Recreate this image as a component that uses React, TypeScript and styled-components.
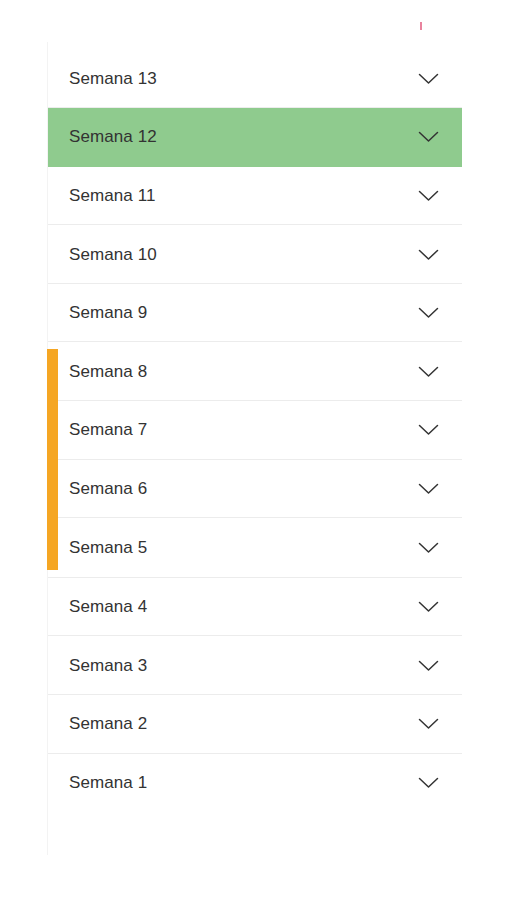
import React from "react";
import styled, { createGlobalStyle } from "styled-components";

const weeks = [13, 12, 11, 10, 9, 8, 7, 6, 5, 4, 3, 2, 1];
const activeWeek = 12;
const flagged = [8, 7, 6, 5];

export default function App() {
  const before = weeks.filter((w) => w > flagged[0]);
  const after = weeks.filter((w) => w < flagged[flagged.length - 1]);

  return (
    <>
      <GlobalStyle />
      <Page>
        <TopBar>
          <Marker />
        </TopBar>
        <Panel>
          {before.map((w) => (
            <WeekRow key={w} week={w} active={w === activeWeek} />
          ))}
          <Group>
            <Stripe />
            <GroupRows>
              {flagged.map((w) => (
                <WeekRow key={w} week={w} inGroup />
              ))}
            </GroupRows>
          </Group>
          {after.map((w) => (
            <WeekRow key={w} week={w} active={w === activeWeek} />
          ))}
        </Panel>
      </Page>
    </>
  );
}

function WeekRow({
  week,
  active,
  inGroup,
}: {
  week: number;
  active?: boolean;
  inGroup?: boolean;
}) {
  return (
    <Row $active={active} $inGroup={inGroup}>
      <Label>Semana {week}</Label>
      <Chevron />
    </Row>
  );
}

function Chevron() {
  return (
    <svg width="21" height="12" viewBox="0 0 21 12" fill="none">
      <polyline
        points="1.5,1.5 10.5,10 19.5,1.5"
        stroke="#333"
        strokeWidth="1.5"
        strokeLinecap="round"
        strokeLinejoin="round"
      />
    </svg>
  );
}

const GlobalStyle = createGlobalStyle`
  body {
    margin: 0;
    background: #fff;
    font-family: "Liberation Sans", Arial, sans-serif;
  }
`;

const Page = styled.div`
  width: 507px;
  height: 900px;
  padding-left: 47px;
  box-sizing: border-box;
`;

const TopBar = styled.div`
  height: 42px;
  padding: 22px 0 0 373px;
  box-sizing: border-box;
`;

const Marker = styled.div`
  width: 2px;
  height: 8px;
  background: rgba(226, 90, 125, 0.75);
`;

const Panel = styled.div`
  width: 415px;
  height: 813px;
  padding-top: 7.5px;
  box-sizing: border-box;
  border-left: 1px solid #f3f3f3;
`;

const Row = styled.div<{ $active?: boolean; $inGroup?: boolean }>`
  height: 58.6px;
  box-sizing: border-box;
  display: flex;
  align-items: center;
  justify-content: space-between;
  padding: 1px 23px 0 ${(p) => (p.$inGroup ? "11px" : "21px")};
  background: ${(p) => (p.$active ? "#8fcb8e" : "#fff")};
  border-bottom: 1px solid ${(p) => (p.$active ? "#8fcb8e" : "#ececec")};

  &:last-child {
    border-bottom-color: transparent;
  }
`;

const Label = styled.span`
  font-size: 17px;
  color: #333;
  letter-spacing: 0.1px;
`;

const Group = styled.div`
  display: flex;
  border-bottom: 1px solid #ececec;
`;

const Stripe = styled.div`
  width: 11px;
  margin: 7px 0 7px -1px;
  background: #f5a623;
`;

const GroupRows = styled.div`
  flex: 1;
`;
